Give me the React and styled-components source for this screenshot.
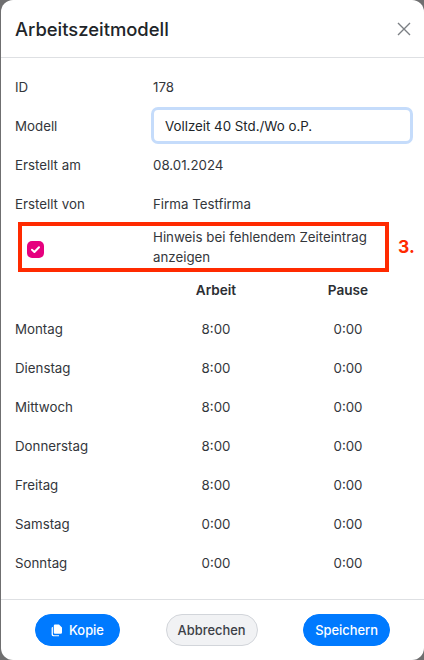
import React from "react";
import styled, { createGlobalStyle } from "styled-components";

const Global = createGlobalStyle`
  html, body { margin: 0; padding: 0; width: 424px; height: 660px; overflow: hidden; background: #6f6f70; }
  * { box-sizing: border-box; }
`;

const Modal = styled.div`
  width: 423px; height: 660px; margin-left: 1px;
  background: #fff; border-radius: 12px;
  display: flex; flex-direction: column;
  font-family: Inter, "Liberation Sans", sans-serif;
  font-size: 13.3px; color: #33363b;
`;
const Header = styled.header`
  height: 58px; flex: none; border-bottom: 1px solid #dee0e3;
  display: flex; align-items: center; justify-content: space-between;
  padding: 0 13px 0 14px;
`;
const Title = styled.h1`
  margin: 0; font-size: 18.4px; font-weight: 500; color: #212529;
`;
const Close = styled.button`
  border: 0; background: none; padding: 0; width: 14px; height: 14px; display: block; color: #7b7f84;
  svg { display: block; }
`;
const Body = styled.main`
  flex: 1; padding: 9px 10px 0 14px; display: flex; flex-direction: column;
`;
const Row = styled.div`
  height: 39px; display: flex; align-items: center;
`;
const Label = styled.div` width: 138px; flex: none; `;
const Value = styled.div` line-height: 20px; `;
const Input = styled.input`
  width: 262px; height: 37px; margin-left: -2px;
  border: 3px solid #c5dcfb; border-radius: 7px; outline: none;
  padding: 0 11px; font: inherit; color: #212529; background: #fff;
`;
const CheckRow = styled(Row)`
  position: relative; height: 47px;
`;
const CheckCell = styled.div`
  width: 138px; flex: none; height: 100%; padding: 5px 0 0 12px;
  display: flex; align-items: center;
`;
const Check = styled.span`
  width: 17px; height: 17px; border-radius: 5px; background: #e6007e;
  display: flex; align-items: center; justify-content: center;
`;
const CheckText = styled(Value)` width: 240px; `;
const Annotation = styled.div`
  position: absolute; left: 3px; top: -1px; width: 371px; height: 50px;
  border: 4px solid #ff2a00; pointer-events: none;
`;
const AnnotationLabel = styled.div`
  position: absolute; left: 383px; top: 13px;
  color: #ff2a00; font-size: 17.5px; font-weight: 700; line-height: 22px;
`;
const TimeGrid = styled.div`
  display: grid; grid-template-columns: 135px 132px 132px; grid-auto-rows: 39px; align-items: center;
`;
const Head = styled.div` text-align: center; font-weight: 600; font-size: 13.6px; color: #2b2e33; `;
const Cell = styled.div` text-align: center; `;
const Day = styled.div``;
const Footer = styled.footer`
  height: 61px; flex: none; border-top: 1px solid #dee0e3;
  display: flex; align-items: center; justify-content: space-between;
  padding: 0 34px 0 34px;
`;
const Button = styled.button`
  height: 32px; border-radius: 16px; padding: 0 ${p => p.$pad}px;
  font: inherit; font-weight: 500; font-size: 12.9px;
  display: flex; align-items: center; gap: 6px;
  color: ${p => (p.$secondary ? "#3c4047" : "#fff")};
  background: ${p => (p.$secondary ? "#f1f2f4" : "#007aff")};
  border: 1px solid ${p => (p.$secondary ? "#d2d5da" : "#007aff")};
`;

const days = [
  ["Montag", "8:00"], ["Dienstag", "8:00"], ["Mittwoch", "8:00"], ["Donnerstag", "8:00"],
  ["Freitag", "8:00"], ["Samstag", "0:00"], ["Sonntag", "0:00"],
];

export default function App() {
  return (
    <>
      <Global />
      <Modal>
        <Header>
          <Title>Arbeitszeitmodell</Title>
          <Close aria-label="Schließen">
            <svg width="14" height="14" viewBox="0 0 14 14" fill="none" stroke="currentColor" strokeWidth="1.4">
              <path d="M1 1 L13 13 M13 1 L1 13" />
            </svg>
          </Close>
        </Header>
        <Body>
          <Row><Label>ID</Label><Value>178</Value></Row>
          <Row><Label>Modell</Label><Input defaultValue="Vollzeit 40 Std./Wo o.P." /></Row>
          <Row><Label>Erstellt am</Label><Value>08.01.2024</Value></Row>
          <Row><Label>Erstellt von</Label><Value>Firma Testfirma</Value></Row>
          <CheckRow>
            <CheckCell>
              <Check>
                <svg width="11" height="11" viewBox="0 0 11 11" fill="none" stroke="#fff" strokeWidth="2" strokeLinecap="round" strokeLinejoin="round">
                  <path d="M2 5.8 L4.4 8 L9 3.2" />
                </svg>
              </Check>
            </CheckCell>
            <CheckText>Hinweis bei fehlendem Zeiteintrag anzeigen</CheckText>
            <Annotation />
            <AnnotationLabel>3.</AnnotationLabel>
          </CheckRow>
          <TimeGrid>
            <div />
            <Head>Arbeit</Head>
            <Head>Pause</Head>
            {days.map(([d, a]) => (
              <React.Fragment key={d}>
                <Day>{d}</Day>
                <Cell>{a}</Cell>
                <Cell>0:00</Cell>
              </React.Fragment>
            ))}
          </TimeGrid>
        </Body>
        <Footer>
          <Button $pad={15}>
            <svg width="12" height="13" viewBox="0 0 12 13" fill="#fff">
              <path d="M4 0.5 H8 L11 3.5 V8.5 A1.2 1.2 0 0 1 9.8 9.7 H4 A1.2 1.2 0 0 1 2.8 8.5 V1.7 A1.2 1.2 0 0 1 4 0.5 Z" />
              <path d="M1.9 3 V10 A1.2 1.2 0 0 0 3.1 11.2 H8 V12.2 H2.2 A1.6 1.6 0 0 1 0.6 10.6 V4.2 A1.2 1.2 0 0 1 1.9 3 Z" />
            </svg>
            Kopie
          </Button>
          <Button $secondary $pad={11}>Abbrechen</Button>
          <Button $pad={11}>Speichern</Button>
        </Footer>
      </Modal>
    </>
  );
}
